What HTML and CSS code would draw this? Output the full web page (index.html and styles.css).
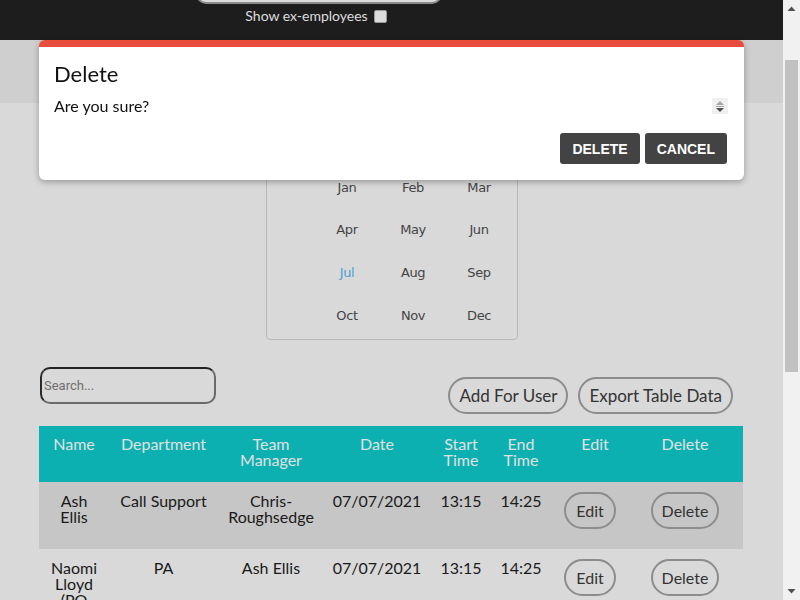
FILE: index.html
```html
<!DOCTYPE html>
<html>
<head>
<meta charset="utf-8">
<link rel="stylesheet" href="styles.css">
</head>
<body>
<div class="page">
  <header class="topbar">
    <input class="top-input" type="text">
    <label class="ex-toggle">Show ex-employees <span class="check"></span></label>
  </header>
  <div class="band"></div>
  <main class="content">
    <div class="calendar">
      <div class="months">
        <span>Jan</span><span>Feb</span><span>Mar</span>
        <span>Apr</span><span>May</span><span>Jun</span>
        <span class="current">Jul</span><span>Aug</span><span>Sep</span>
        <span>Oct</span><span>Nov</span><span>Dec</span>
      </div>
    </div>
    <div class="toolbar">
      <input class="search" type="text" placeholder="Search...">
      <div class="actions">
        <button class="pill">Add For User</button>
        <button class="pill">Export Table Data</button>
      </div>
    </div>
    <table class="grid">
      <colgroup>
        <col class="c1"><col class="c2"><col class="c3"><col class="c4"><col class="c5"><col class="c6"><col class="c7"><col class="c8">
      </colgroup>
      <thead>
        <tr><th>Name</th><th>Department</th><th>Team<br>Manager</th><th>Date</th><th>Start<br>Time</th><th>End<br>Time</th><th>Edit</th><th>Delete</th></tr>
      </thead>
      <tbody>
        <tr class="odd">
          <td>Ash<br>Ellis</td><td>Call Support</td><td>Chris-<br>Roughsedge</td><td>07/07/2021</td><td>13:15</td><td>14:25</td>
          <td class="edit-cell"><button class="pill small">Edit</button></td><td><button class="pill small">Delete</button></td>
        </tr>
        <tr>
          <td>Naomi<br>Lloyd<br>(PO</td><td>PA</td><td>Ash Ellis</td><td>07/07/2021</td><td>13:15</td><td>14:25</td>
          <td class="edit-cell"><button class="pill small">Edit</button></td><td><button class="pill small">Delete</button></td>
        </tr>
      </tbody>
    </table>
  </main>
</div>

<div class="modal">
  <h2 class="modal-title">Delete</h2>
  <div class="modal-body">
    <p>Are you sure?</p>
    <svg class="spin" width="16" height="16" viewBox="0 0 16 16"><rect width="16" height="16" fill="#f0f0f0"/><path d="M4 7 L8 3 L12 7 Z" fill="#a8a8a8"/><path d="M4 10 L12 10 L8 14 Z" fill="#505050"/><rect x="4" y="8" width="8" height="1" fill="#a8a8a8"/></svg>
  </div>
  <div class="modal-actions">
    <button class="dark-btn">DELETE</button>
    <button class="dark-btn">CANCEL</button>
  </div>
</div>

<div class="scrollbar">
  <svg class="arrow up" width="17" height="17" viewBox="0 0 17 17"><path d="M4.5 11 L8.5 6.5 L12.5 11 Z" fill="#505050"/></svg>
  <div class="track"><div class="thumb"></div></div>
  <svg class="arrow down" width="17" height="17" viewBox="0 0 17 17"><path d="M4.5 6 L12.5 6 L8.5 10.5 Z" fill="#505050"/></svg>
</div>
</body>
</html>
```

FILE: styles.css
```css
html, body {
  margin: 0;
  padding: 0;
  height: 600px;
  overflow: hidden;
  background: #d9d9d9;
}
.page {
  width: 783px;
  margin-top: -30px;
  font-family: Lato, "Open Sans", sans-serif;
}
.topbar {
  height: 70px;
  background: #1d1d1d;
  display: flex;
  flex-direction: column;
  align-items: center;
}
.top-input {
  box-sizing: border-box;
  width: 246px;
  height: 34px;
  margin: 0 0 0 -145px;
  background: #dcdcdc;
  border: 2px solid #8a8a8a;
  border-radius: 10px;
}
.ex-toggle {
  margin-top: 3px;
  margin-left: -151px;
  color: #dedede;
  font-size: 14px;
  display: flex;
  align-items: center;
  gap: 6px;
  line-height: 18px;
}
.check {
  display: inline-block;
  width: 11px;
  height: 11px;
  background: #dcdcdc;
  border: 1px solid #9a9a9a;
  border-radius: 2px;
}
.band {
  height: 63px;
  background: #cfcfcf;
}
.content {
  padding: 0 40px 0 39px;
}
.calendar {
  box-sizing: border-box;
  width: 252px;
  margin: 17px 0 0 227px;
  height: 220px;
  border: 1px solid #b8b8b8;
  border-radius: 4px;
  padding: 45px 0 0 47px;
  font-family: "DejaVu Sans", Verdana, sans-serif;
  font-size: 13px;
  color: #444;
}
.months {
  display: grid;
  grid-template-columns: repeat(3, 66px);
  grid-auto-rows: 42.6px;
  align-items: center;
  justify-items: center;
  letter-spacing: -0.4px;
}
.months .current {
  color: #4b9fd6;
}
.toolbar {
  display: flex;
  justify-content: space-between;
  align-items: flex-start;
  margin-top: 27px;
  padding-right: 10px;
}
.search {
  box-sizing: border-box;
  width: 176px;
  height: 37px;
  margin-left: 1px;
  padding: 0 2px;
  background: transparent;
  border: 2px solid #555;
  border-top-color: #222;
  border-left-color: #2a2a2a;
  border-bottom-color: #6a6a6a;
  border-right-color: #6a6a6a;
  border-radius: 10px;
  font-family: Roboto, sans-serif;
  font-size: 13px;
  color: #333;
}
.search::placeholder {
  color: #6f6f6f;
}
.actions {
  display: flex;
  gap: 10px;
  margin-top: 10px;
}
.pill {
  box-sizing: border-box;
  height: 37px;
  padding: 0 9px;
  background: transparent;
  border: 2px solid #8c8c8c;
  border-radius: 19px;
  font-family: Lato, "Open Sans", sans-serif;
  font-size: 17px;
  color: #333;
}
.grid {
  margin-top: 12px;
  width: 704px;
  border-collapse: collapse;
  table-layout: fixed;
  font-size: 16px;
}
.c1 { width: 70px; }
.c2 { width: 109px; }
.c3 { width: 106px; }
.c4 { width: 106px; }
.c5 { width: 62px; }
.c6 { width: 58px; }
.c7 { width: 90px; }
.c8 { width: 103px; }
.grid th {
  background: #0db0b0;
  color: #e0e0e0;
  font-weight: normal;
  height: 56px;
  padding: 10px 0 0;
  box-sizing: border-box;
  vertical-align: top;
  line-height: 16px;
}
.grid th:last-child, .grid td:last-child {
  padding-right: 13px;
}
.grid td {
  text-align: center;
  vertical-align: top;
  color: #1a1a1a;
  line-height: 16px;
  padding: 11px 0 0;
  height: 67px;
  box-sizing: border-box;
}
.grid td.edit-cell {
  padding-right: 10px;
}
.grid tr.odd td {
  background: #c6c6c6;
}
.grid td .small {
  margin-top: -1px;
  height: 37px;
  font-size: 16px;
  padding: 0 9px;
}
.grid td.edit-cell .small {
  padding: 0 10px;
}
.modal {
  position: fixed;
  left: 39px;
  top: 40px;
  width: 705px;
  height: 140px;
  box-sizing: border-box;
  background: #fff;
  border-top: 7px solid #e84c3d;
  border-radius: 6px;
  box-shadow: 0 2px 6px rgba(0, 0, 0, 0.3);
  padding: 14px 16px 0 15px;
  font-family: Lato, "Open Sans", sans-serif;
}
.modal-title {
  margin: 0;
  font-size: 22px;
  font-weight: normal;
  line-height: 26px;
  color: #111;
}
.modal-body {
  display: flex;
  justify-content: space-between;
  align-items: center;
  margin-top: 9px;
}
.modal-body p {
  margin: 0;
  font-size: 16px;
  color: #111;
}
.spin {
  display: block;
  margin-right: 0;
}
.modal-actions {
  display: flex;
  justify-content: flex-end;
  gap: 5px;
  margin-top: 18px;
  padding-right: 1px;
}
.dark-btn {
  height: 31px;
  padding: 0 12px;
  background: #434343;
  color: #fff;
  border: none;
  border-radius: 3px;
  font-family: "Liberation Sans", Arial, sans-serif;
  font-weight: bold;
  font-size: 14px;
}
.scrollbar {
  position: fixed;
  right: 0;
  top: 0;
  width: 17px;
  height: 600px;
  background: #f1f1f1;
  display: flex;
  flex-direction: column;
}
.arrow {
  display: block;
  flex: none;
}
.track {
  flex: 1;
  position: relative;
}
.thumb {
  position: absolute;
  left: 2px;
  right: 2px;
  top: 43px;
  height: 312px;
  background: #c1c1c1;
}
```
